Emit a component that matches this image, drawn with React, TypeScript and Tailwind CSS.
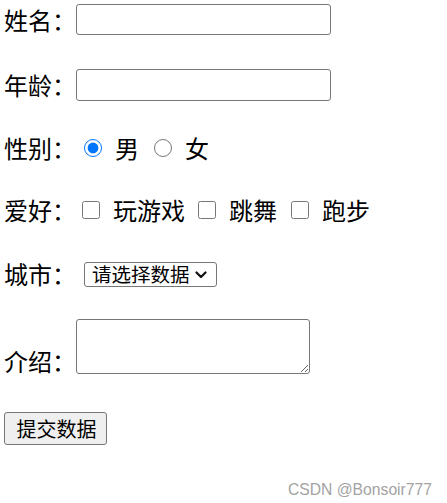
import React from "react"

const cjk = { fontFamily: '"Noto Sans CJK SC", "Microsoft YaHei", sans-serif' }

export default function App() {
  return (
    <div className="w-[447px] h-[503px] bg-white text-black overflow-hidden" style={cjk}>
      <form className="flex flex-col pt-[4px] pl-[4px]" onSubmit={(e) => e.preventDefault()}>
        <div className="flex items-center h-[31px]">
          <span className="text-[24px] leading-none w-[72px]">姓名：</span>
          <input type="text" className="w-[255px] h-[31px] border border-[#767676] rounded-[3px] bg-white px-1 text-[16px]" />
        </div>

        <div className="flex items-center h-[32px] mt-[34px]">
          <span className="text-[24px] leading-none w-[72px]">年龄：</span>
          <input type="text" className="w-[255px] h-[32px] border border-[#767676] rounded-[3px] bg-white px-1 text-[16px]" />
        </div>

        <div className="flex items-center h-[32px] mt-[31px]">
          <span className="text-[24px] leading-none w-[72px]">性别：</span>
          <input type="radio" name="sex" defaultChecked className="w-[18px] h-[18px] m-0 ml-[8px]" />
          <span className="text-[24px] leading-none ml-[13px]">男</span>
          <input type="radio" name="sex" className="w-[18px] h-[18px] m-0 ml-[15px]" />
          <span className="text-[24px] leading-none ml-[13px]">女</span>
        </div>

        <div className="flex items-center h-[32px] mt-[30px]">
          <span className="text-[24px] leading-none w-[72px]">爱好：</span>
          <input type="checkbox" className="w-[18px] h-[18px] m-0 ml-[6px]" />
          <span className="text-[24px] leading-none ml-[13px]">玩游戏</span>
          <input type="checkbox" className="w-[18px] h-[18px] m-0 ml-[13px]" />
          <span className="text-[24px] leading-none ml-[13px]">跳舞</span>
          <input type="checkbox" className="w-[18px] h-[18px] m-0 ml-[14px]" />
          <span className="text-[24px] leading-none ml-[13px]">跑步</span>
        </div>

        <div className="flex items-center h-[32px] mt-[32px]">
          <span className="text-[24px] leading-none w-[72px]">城市：</span>
          <div className="relative ml-[8px] w-[133px] h-[25px]">
            <select
              defaultValue=""
              className="appearance-none w-full h-full border border-[#767676] rounded-[3px] bg-white pl-[7px] text-[19.5px] leading-none"
            >
              <option value="">请选择数据</option>
              <option value="bj">北京</option>
              <option value="sh">上海</option>
            </select>
            <svg
              className="pointer-events-none absolute right-[10px] top-[9px]"
              width="12"
              height="8"
              viewBox="0 0 12 8"
              fill="none"
            >
              <polyline points="1.5,1.5 6,6 10.5,1.5" stroke="#111" strokeWidth="2.2" strokeLinecap="round" strokeLinejoin="round" />
            </svg>
          </div>
        </div>

        <div className="flex items-end h-[55px] mt-[29px]">
          <span className="text-[24px] leading-none w-[72px] mb-[1px]">介绍：</span>
          <textarea className="w-[234px] h-[55px] border border-[#767676] rounded-[3px] bg-white text-[16px] resize" />
        </div>

        <div className="flex mt-[38px]">
          <button
            type="submit"
            className="w-[103px] h-[33px] border border-[#767676] rounded-[3px] bg-[#efefef] text-[20px] leading-none pl-[2px]"
          >
            提交数据
          </button>
        </div>

        <div className="flex justify-end pr-[15px] mt-[33px]">
          <span
            className="text-[15.7px] text-[#a3a3a3]"
            style={{ fontFamily: '"Liberation Sans", Arial, sans-serif' }}
          >
            CSDN @Bonsoir777
          </span>
        </div>
      </form>
    </div>
  )
}
